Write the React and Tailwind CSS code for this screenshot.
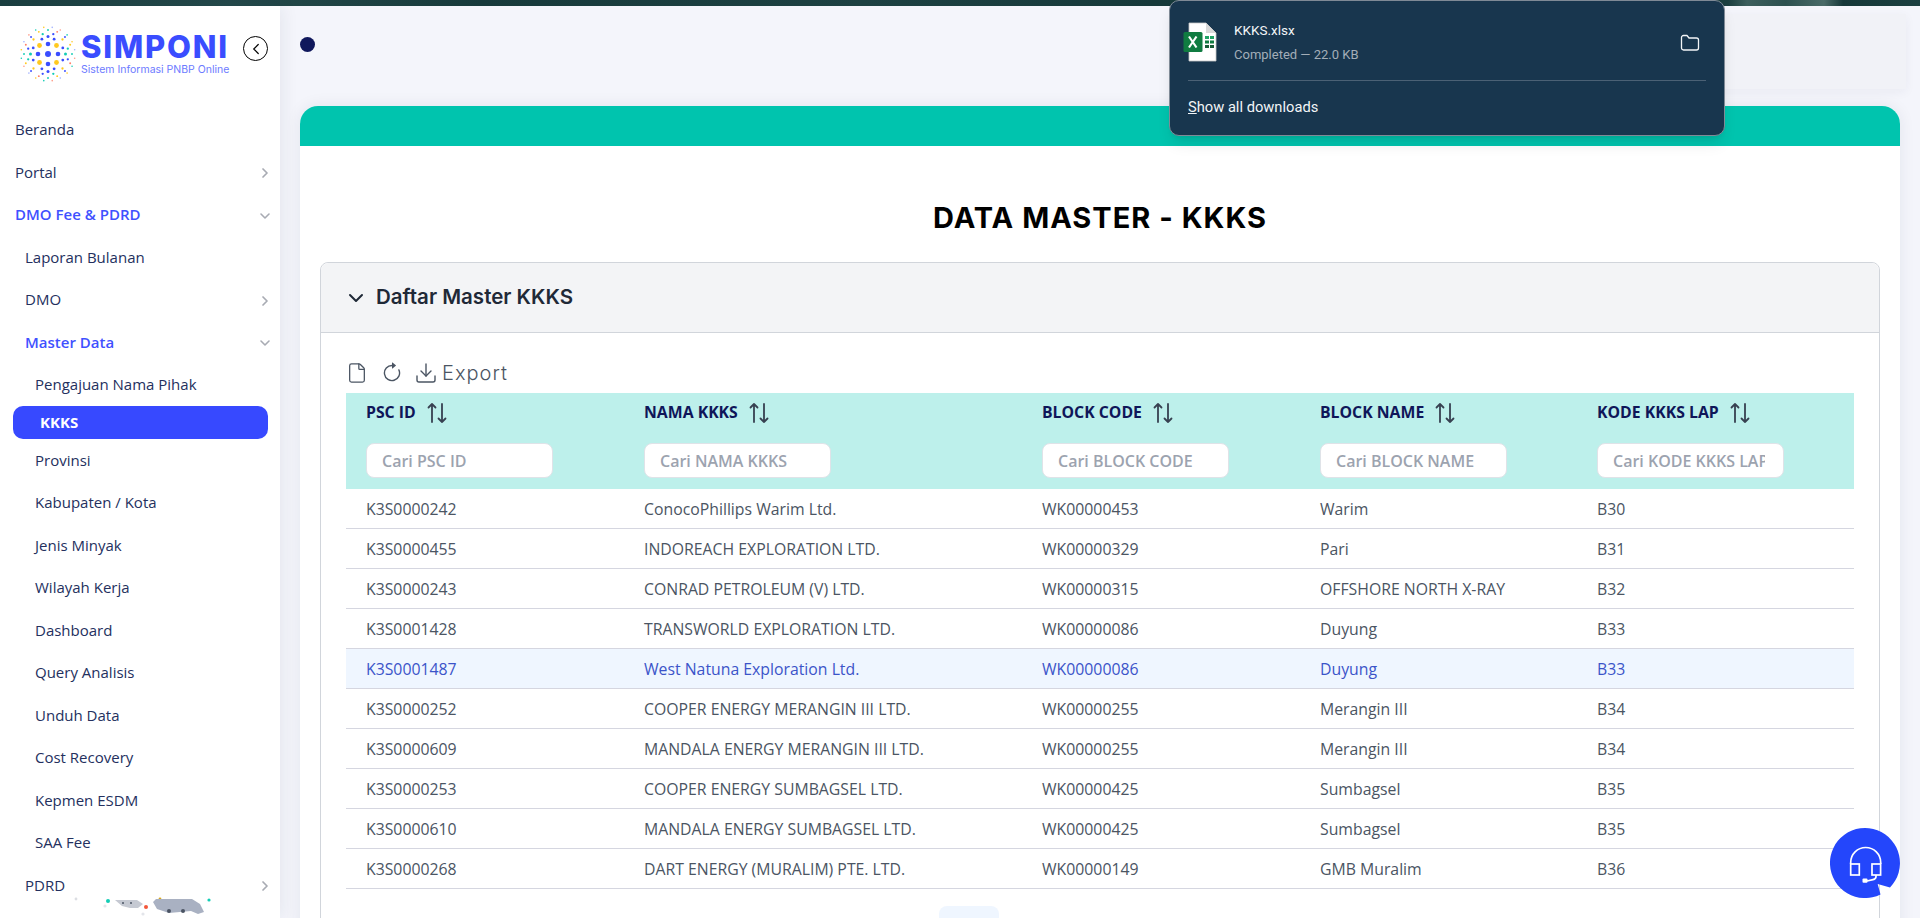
import React from "react";
import { ChevronRight, ChevronDown, File, Download } from "lucide-react";
import { BsArrowClockwise } from "react-icons/bs";

const navItems = [
  { label: "Beranda", level: 0 },
  { label: "Portal", level: 0, chevron: "right" },
  { label: "DMO Fee & PDRD", level: 0, chevron: "down", open: true },
  { label: "Laporan Bulanan", level: 1 },
  { label: "DMO", level: 1, chevron: "right" },
  { label: "Master Data", level: 1, chevron: "down", open: true },
  { label: "Pengajuan Nama Pihak", level: 2 },
  { label: "KKKS", level: 2, active: true },
  { label: "Provinsi", level: 2 },
  { label: "Kabupaten / Kota", level: 2 },
  { label: "Jenis Minyak", level: 2 },
  { label: "Wilayah Kerja", level: 2 },
  { label: "Dashboard", level: 2 },
  { label: "Query Analisis", level: 2 },
  { label: "Unduh Data", level: 2 },
  { label: "Cost Recovery", level: 2 },
  { label: "Kepmen ESDM", level: 2 },
  { label: "SAA Fee", level: 2 },
  { label: "PDRD", level: 1, chevron: "right" },
];

const rows = [
  ["K3S0000242", "ConocoPhillips Warim Ltd.", "WK00000453", "Warim", "B30"],
  ["K3S0000455", "INDOREACH EXPLORATION LTD.", "WK00000329", "Pari", "B31"],
  ["K3S0000243", "CONRAD PETROLEUM (V) LTD.", "WK00000315", "OFFSHORE NORTH X-RAY", "B32"],
  ["K3S0001428", "TRANSWORLD EXPLORATION LTD.", "WK00000086", "Duyung", "B33"],
  ["K3S0001487", "West Natuna Exploration Ltd.", "WK00000086", "Duyung", "B33"],
  ["K3S0000252", "COOPER ENERGY MERANGIN III LTD.", "WK00000255", "Merangin III", "B34"],
  ["K3S0000609", "MANDALA ENERGY MERANGIN III LTD.", "WK00000255", "Merangin III", "B34"],
  ["K3S0000253", "COOPER ENERGY SUMBAGSEL LTD.", "WK00000425", "Sumbagsel", "B35"],
  ["K3S0000610", "MANDALA ENERGY SUMBAGSEL LTD.", "WK00000425", "Sumbagsel", "B35"],
  ["K3S0000268", "DART ENERGY (MURALIM) PTE. LTD.", "WK00000149", "GMB Muralim", "B36"],
];

const columns = [
  { label: "PSC ID", width: "w-[278px]" },
  { label: "NAMA KKKS", width: "w-[398px]" },
  { label: "BLOCK CODE", width: "w-[278px]" },
  { label: "BLOCK NAME", width: "w-[277px]" },
  { label: "KODE KKKS LAP", width: "w-[277px]" },
];

const logoRings = [
  { r: 0, n: 1, s: 3, start: 0, colors: ["#3a4dff"] },
  { r: 10, n: 4, s: 2.3, start: 0, colors: ["#3a4dff"] },
  { r: 12, n: 4, s: 2.4, start: 45, colors: ["#ffc91f"] },
  { r: 16, n: 8, s: 1.4, start: 22.5, colors: ["#3a4dff", "#3a4dff"] },
  { r: 17.5, n: 4, s: 1.5, start: 0, colors: ["#13cdb5", "#3a4dff"] },
  { r: 20.5, n: 12, s: 1.15, start: 15, colors: ["#3a4dff", "#ffc91f", "#13cdb5"] },
  { r: 24, n: 16, s: 0.95, start: 0, colors: ["#13cdb5", "#ff7f66", "#3a4dff", "#ffc91f"] },
  { r: 27, n: 20, s: 0.8, start: 9, colors: ["#ff9a85", "#13cdb5", "#ffc91f", "#9fb0ff"] },
];

const LogoMark = () => (
  <svg width="56" height="56" viewBox="0 0 56 56" className="shrink-0">
    {logoRings.map((ring, i) =>
      Array.from({ length: ring.n }).map((_, j) => {
        const a = ((ring.start + (j * 360) / ring.n) * Math.PI) / 180;
        return (
          <circle
            key={`${i}-${j}`}
            cx={28 + ring.r * Math.cos(a)}
            cy={28 + ring.r * Math.sin(a)}
            r={ring.s}
            fill={ring.colors[j % ring.colors.length]}
          />
        );
      })
    )}
  </svg>
);

const SortIcon = () => (
  <svg width="20" height="22" viewBox="0 0 20 22" fill="none" stroke="#374151" strokeWidth="1.8" strokeLinecap="round" strokeLinejoin="round" className="shrink-0">
    <path d="M5 20V2M1.5 5.5L5 2l3.5 3.5" />
    <path d="M15 2v18M11.5 16.5L15 20l3.5-3.5" />
  </svg>
);

const ExcelIcon = () => (
  <svg width="36" height="40" viewBox="0 0 36 40">
    <path d="M6 1h17l10 10v28H6z" fill="#fff" stroke="#c8c8c8" strokeWidth="0.8" />
    <path d="M23 1v10h10z" fill="#d9d9d9" />
    <rect x="0.5" y="10" width="19" height="20" rx="1.5" fill="#107c41" />
    <path d="M6 14.5l7.5 11M13.5 14.5L6 25.5" stroke="#fff" strokeWidth="2.2" fill="none" />
    <rect x="22" y="14" width="4" height="3" fill="#21a366" />
    <rect x="27" y="14" width="4" height="3" fill="#21a366" />
    <rect x="22" y="18.5" width="4" height="3" fill="#107c41" />
    <rect x="27" y="18.5" width="4" height="3" fill="#107c41" />
    <rect x="22" y="23" width="4" height="3" fill="#185c37" />
    <rect x="27" y="23" width="4" height="3" fill="#185c37" />
  </svg>
);

const ChatButton = () => (
  <svg width="70" height="70" viewBox="0 0 70 70" className="absolute left-[1830px] top-[828px]">
    <path d="M60 59.5A35 35 0 1 0 50.5 66.4L47.7 56Z" fill="#2446fb" />
    <g fill="none" stroke="#fff" strokeWidth="1.7">
      <path d="M20.7 36v-1.5a14.5 14.5 0 0 1 30 0V36" />
      <rect x="20.7" y="36" width="8.6" height="11" />
      <rect x="42" y="36" width="8.6" height="11" />
      <path d="M46 47v1.5q0 2.5-3 3.2L37 53" />
    </g>
    <rect x="32.5" y="50.5" width="5" height="4.2" rx="1" fill="#fff" />
  </svg>
);

const Sidebar = () => (
  <aside className="relative z-10 w-[280px] h-[912px] shrink-0 bg-white shadow-[3px_0_16px_rgba(30,40,70,0.07)] font-['Open_Sans',sans-serif]">
    <div className="h-[102px] flex items-start pl-5 pt-5">
      <LogoMark />
      <div className="ml-[5px] w-[150px] pt-[8px]">
        <div className="text-[31px] leading-[26px] font-extrabold tracking-[1.8px] text-[#3a4dff] font-['Inter',sans-serif]">SIMPONI</div>
        <div className="mt-[3px] text-[10.5px] leading-[13px] text-[#6d7bff] font-['Inter',sans-serif] whitespace-nowrap">Sistem Informasi PNBP Online</div>
      </div>
      <button className="ml-[12px] mt-[10px] w-[25px] h-[25px] rounded-full border-[1.5px] border-black bg-white flex items-center justify-center">
        <ChevronRight size={18} strokeWidth={1.6} className="rotate-180 text-black" />
      </button>
    </div>
    <nav>
      {navItems.map((item) => {
        const pad = item.level === 0 ? "pl-[15px]" : item.level === 1 ? "pl-[25px]" : "pl-[35px]";
        if (item.active) {
          return (
            <div key={item.label} className="h-[33px] mx-[13px] w-[255px] rounded-[10px] bg-[#3749ff] flex items-center pl-[27px] text-[15px] font-bold text-white">
              {item.label}
            </div>
          );
        }
        return (
          <div key={item.label} className={`h-[42.5px] flex items-center justify-between pr-[7px] text-[15px] ${pad} ${item.open ? "text-[#3f51ff] font-semibold" : "text-[#24305e]"}`}>
            <span>{item.label}</span>
            {item.chevron === "right" && <ChevronRight size={16} strokeWidth={2.6} className="text-[#a8abb3] mt-[3px]" />}
            {item.chevron === "down" && <ChevronDown size={16} strokeWidth={2.4} className="text-[#a8abb3] mt-[3px]" />}
          </div>
        );
      })}
    </nav>
    {/* illustration cut off under the menu */}
    <svg width="280" height="24" viewBox="0 0 280 24" className="absolute left-0 bottom-0">
      <circle cx="108" cy="7" r="2" fill="#13cdb5" />
      <circle cx="105" cy="12" r="1.6" fill="#e3e5ea" />
      <circle cx="146" cy="13" r="2" fill="#f4573a" />
      <circle cx="143" cy="20" r="1.6" fill="#e3e5ea" />
      <circle cx="209" cy="6" r="1.6" fill="#13cdb5" />
      <circle cx="160" cy="5" r="1.4" fill="#d8a820" />
      <circle cx="76" cy="5" r="1.4" fill="#dcdee3" />
      <path d="M115 6h22l6 4-5 4h-8l-8-2z" fill="#c5c9d2" />
      <path d="M153 8l3-3h36l8 5 4 8-6 2-7-3-22 2-12-4z" fill="#a9b1c2" />
      <circle cx="169" cy="17" r="2" fill="#4a5363" />
      <circle cx="183" cy="17" r="2" fill="#4a5363" />
      <circle cx="123" cy="9" r="1" fill="#4a5363" />
      <circle cx="131" cy="9" r="1" fill="#4a5363" />
    </svg>
  </aside>
);

const DataTable = () => (
  <table className="w-[1508px] table-fixed border-separate border-spacing-0 font-['Open_Sans',sans-serif]">
    <thead>
      <tr className="bg-[#bdf0eb]">
        {columns.map((col) => (
          <th key={col.label} className={`${col.width} pl-5 pb-[11px] text-left font-normal align-top`}>
            <div className="h-10 flex items-center gap-[11px] text-[15.8px] font-bold text-[#0f1659]">
              {col.label}
              <SortIcon />
            </div>
            <input
              placeholder={`Cari ${col.label}`}
              className="mt-[10px] block w-[187px] h-[35px] rounded-lg border border-[#dfe3e8] bg-white pl-[15px] pr-[18px] text-[16px] font-semibold outline-none placeholder:text-[#9ca3af]"
            />
          </th>
        ))}
      </tr>
    </thead>
    <tbody>
      {rows.map((row, i) => (
        <tr key={row[0]} className={i === 4 ? "bg-[#eff6ff] text-[#3b54c9]" : "text-[#4b5563]"}>
          {row.map((cell, j) => (
            <td key={j} className="h-10 pl-5 pt-[2px] text-[15.8px] border-b border-[#d5d6e0] whitespace-nowrap">
              {cell}
            </td>
          ))}
        </tr>
      ))}
    </tbody>
  </table>
);

const DownloadPopup = () => (
  <div className="absolute z-20 left-[1169px] top-0 w-[556px] h-[136px] rounded-[10px] border border-[#7f8a96] bg-[#18364e] shadow-lg font-['Roboto',sans-serif]">
    <div className="flex items-center h-[79px] pl-[13px] pr-[24px]">
      <div className="mt-[2px]">
        <ExcelIcon />
      </div>
      <div className="ml-[15px] flex-1 pt-[3px]">
        <div className="text-[13.5px] leading-[18px] text-[#f2f5f7]">KKKS.xlsx</div>
        <div className="mt-[7px] text-[13px] leading-[18px] text-[#a3aeb8]">Completed — 22.0 KB</div>
      </div>
      <svg width="20" height="18" viewBox="0 0 20 18" fill="none" stroke="#f2f5f7" strokeWidth="1.3" strokeLinejoin="round" className="mt-[4px]">
        <path d="M1.5 3.5a2 2 0 0 1 2-2h3.5l2 2.5h7.5a2 2 0 0 1 2 2v8a2 2 0 0 1-2 2h-13a2 2 0 0 1-2-2z" />
      </svg>
    </div>
    <div className="mx-[18px] border-t border-[#4b6175]" />
    <div className="pl-[18px] pt-[17px] text-[14.7px] leading-[18px] text-[#f2f5f7]">
      <span className="underline">S</span>how all downloads
    </div>
  </div>
);

export default function App() {
  return (
    <div className="relative w-[1920px] h-[918px] overflow-hidden bg-[#f4f5fb]">
      <div className="relative z-10 h-[6px] bg-[linear-gradient(90deg,#1b3f40_0%,#24494a_12%,#173a3b_25%,#1d4142_45%,#16393a_60%,#1b3e3f_90%,#3d5f5d_91%,#2d5150_93%,#4a6b68_95%,#163839_96%,#1b3f40_100%)]" />
      <div className="flex">
        <Sidebar />
        <main className="flex-1 min-w-0 px-5 h-[912px] overflow-hidden">
          <div className="flex h-[75px] mt-2 -mr-[6px]">
            <div className="w-[15px] h-[15px] mt-[23px] rounded-full bg-[#10185c] shrink-0" />
            <div className="ml-[1000px] flex-1 bg-[#f1f2f7] shadow-[0_3px_10px_rgba(30,40,70,0.05)]" />
          </div>
          <section className="mt-[17px] rounded-t-[18px] bg-white shadow-[0_0_16px_rgba(30,40,70,0.08)]">
            <div className="h-10 bg-[#00c4ae] rounded-t-[18px]" />
            <h1 className="pt-[54px] h-[116px] text-center text-[29px] leading-[36px] tracking-[1px] font-bold text-black font-['Inter',sans-serif]">DATA MASTER - KKKS</h1>
            <div className="mx-5 rounded-t-lg border border-[#d1d5db]">
              <div className="h-[70px] flex items-center gap-2 pl-[25px] bg-[#f3f4f6] rounded-t-lg border-b border-[#d1d5db] text-[20.5px] font-semibold text-[#1f2937] font-['Inter',sans-serif]">
                <ChevronDown size={24} strokeWidth={2} className="-ml-[2px]" />
                Daftar Master KKKS
              </div>
              <div className="px-[25px] pb-5">
                <div className="h-[60px] pt-5 flex items-center text-[#4b5563]">
                  <File size={22} strokeWidth={1.4} />
                  <BsArrowClockwise size={22} className="ml-[13px]" />
                  <Download size={24} strokeWidth={1.4} className="ml-[11px]" />
                  <span className="ml-1 text-[20px] font-light tracking-[1px] font-['Inter',sans-serif]">Export</span>
                </div>
                <DataTable />
                <div className="mt-[17px] ml-[593px] w-[60px] h-10 rounded-lg bg-[#eff6ff]" />
              </div>
            </div>
          </section>
        </main>
      </div>
      <DownloadPopup />
      <ChatButton />
    </div>
  );
}
